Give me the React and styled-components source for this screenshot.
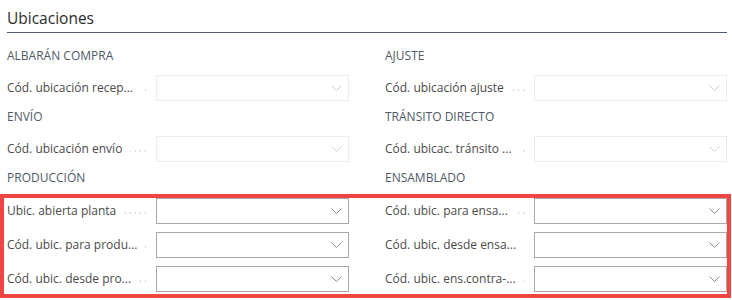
import React from "react"
import styled, { createGlobalStyle } from "styled-components"

const GlobalStyle = createGlobalStyle`
  body {
    margin: 0;
    background: #fff;
    font-family: "Open Sans", "Noto Sans", sans-serif;
  }
`

const Card = styled.section`
  padding: 8px 5px 0 7px;
`

const Title = styled.h2`
  margin: 0;
  font-size: 15.5px;
  font-weight: 400;
  line-height: 20px;
  color: #2b2b2b;
  padding-bottom: 4px;
  border-bottom: 1px solid #4e5a6a;
`

const Group = styled.div`
  padding-top: ${(p) => (p.$first ? "15px" : "8px")};
`

const TwoCols = styled.div`
  display: grid;
  grid-template-columns: 1fr 1fr;
  column-gap: 36px;
  row-gap: 8px;
`

const Headings = styled(TwoCols)`
  margin-bottom: 11px;
`

const Heading = styled.div`
  font-size: 12px;
  font-weight: 500;
  line-height: 16px;
  color: #4f5967;
  text-transform: uppercase;
`

const Highlight = styled(TwoCols)`
  margin: -3px -4px 0 -7px;
  padding: 0 0 2px 3px;
  border: 4px solid #f04545;
`

const Field = styled.div`
  display: grid;
  grid-template-columns: 149px 1fr;
  align-items: center;
`

const Label = styled.div`
  display: flex;
  align-items: center;
  padding-right: 8px;
  min-width: 0;
  font-size: 12px;
  line-height: 16px;
  color: #4a4a4a;
`

const LabelText = styled.span`
  white-space: nowrap;
`

const Leader = styled.span`
  flex: 1;
  height: 2px;
  margin: 4px 0 0 8px;
  background-image: radial-gradient(circle, #d2d2d2 0.7px, transparent 0.9px);
  background-size: 5px 2px;
  background-position: right center;
`

const Select = styled.div`
  box-sizing: border-box;
  height: 26px;
  border: 1px solid ${(p) => (p.$disabled ? "#ececec" : "#a8a8a8")};
  background: #fff;
  display: flex;
  align-items: center;
  justify-content: flex-end;
  padding-right: 6px;
  color: ${(p) => (p.$disabled ? "#cfcfcf" : "#8c8c8c")};
`

const Chevron = () => (
  <svg width="11" height="6" viewBox="0 0 11 6" fill="none">
    <path d="M0.5 0.5 L5.5 5.5 L10.5 0.5" stroke="currentColor" strokeWidth="1" />
  </svg>
)

const FieldRow = ({ label, disabled }) => (
  <Field>
    <Label>
      <LabelText>{label}</LabelText>
      <Leader />
    </Label>
    <Select $disabled={disabled}>
      <Chevron />
    </Select>
  </Field>
)

const App = () => {
  return (
    <Card>
      <GlobalStyle />
      <Title>Ubicaciones</Title>

      <Group $first>
        <Headings>
          <Heading>Albarán compra</Heading>
          <Heading>Ajuste</Heading>
        </Headings>
        <TwoCols>
          <FieldRow label="Cód. ubicación recep..." disabled />
          <FieldRow label="Cód. ubicación ajuste" disabled />
        </TwoCols>
      </Group>

      <Group>
        <Headings>
          <Heading>Envío</Heading>
          <Heading>Tránsito directo</Heading>
        </Headings>
        <TwoCols>
          <FieldRow label="Cód. ubicación envío" disabled />
          <FieldRow label="Cód. ubicac. tránsito ..." disabled />
        </TwoCols>
      </Group>

      <Group>
        <Headings>
          <Heading>Producción</Heading>
          <Heading>Ensamblado</Heading>
        </Headings>
        <Highlight>
          <FieldRow label="Ubic. abierta planta" />
          <FieldRow label="Cód. ubic. para ensa..." />
          <FieldRow label="Cód. ubic. para produ..." />
          <FieldRow label="Cód. ubic. desde ensa..." />
          <FieldRow label="Cód. ubic. desde pro..." />
          <FieldRow label="Cód. ubic. ens.contra-..." />
        </Highlight>
      </Group>
    </Card>
  )
}

export default App
